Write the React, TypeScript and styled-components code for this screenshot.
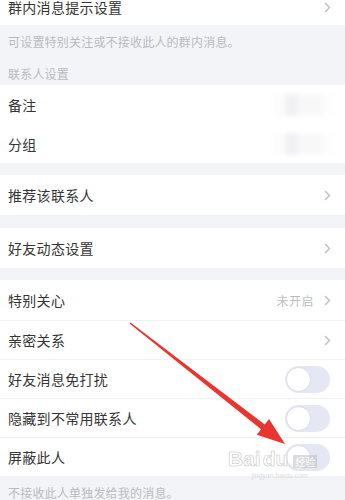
import { ReactNode } from 'react';
import styled, { createGlobalStyle } from 'styled-components';

const GlobalStyle = createGlobalStyle`
  html, body {
    margin: 0;
    padding: 0;
    background: #f3f4f7;
  }
  body {
    font-family: "Noto Sans CJK SC", "Noto Sans", sans-serif;
    -webkit-font-smoothing: antialiased;
  }
`;

const Screen = styled.div`
  position: relative;
  width: 345px;
  height: 500px;
  overflow: hidden;
  background: #f3f4f7;
`;

// page scrolled a little, so the first row is cut at the top
const Page = styled.div`
  display: flex;
  flex-direction: column;
  margin-top: -11px;
`;

const Row = styled.div<{ $h: number; $line?: boolean }>`
  display: flex;
  align-items: center;
  justify-content: space-between;
  height: ${(p) => p.$h}px;
  box-sizing: border-box;
  padding: 0 14px 0 8px;
  background: #fff;
  border-top: ${(p) => (p.$line ? '1px solid #f1f1f3' : 'none')};
`;

const Label = styled.span`
  font-size: 14px;
  letter-spacing: 0.3px;
  color: #353535;
  line-height: 20px;
`;

const Right = styled.div`
  display: flex;
  align-items: center;
  gap: 10px;
`;

const Hint = styled.span`
  font-size: 12px;
  letter-spacing: 0.5px;
  color: #bdbdc1;
`;

const Caption = styled.div<{ $pad: string }>`
  padding: ${(p) => p.$pad};
  font-size: 12px;
  line-height: 17px;
  letter-spacing: 0.2px;
  color: #b9babe;
`;

const Gap = styled.div<{ $h: number }>`
  height: ${(p) => p.$h}px;
`;

// blurred-out value (remark / group name)
const Masked = styled.div`
  width: 62px;
  height: 22px;
  margin-right: -4px;
  background: linear-gradient(
    90deg,
    #fcfcfc 0 20%,
    #f1f1f3 20% 40%,
    #f8f8f9 40% 80%,
    #fdfdfd 80% 100%
  );
  filter: blur(2px);
`;

const Track = styled.div`
  display: flex;
  align-items: center;
  width: 45px;
  height: 27px;
  margin-right: 1px;
  border-radius: 14px;
  background: #e5e7f4;
`;

const Knob = styled.div`
  width: 25px;
  height: 25px;
  margin-left: 1px;
  border-radius: 50%;
  box-sizing: border-box;
  background: #fff;
  border: 1px solid #dcdde3;
`;

const Overlay = styled.svg`
  position: absolute;
  left: 0;
  top: 0;
  pointer-events: none;
`;

const Watermark = styled.div`
  position: absolute;
  left: 228px;
  top: 448px;
  display: flex;
  flex-direction: column;
  align-items: center;
  pointer-events: none;
`;

const MarkLine = styled.div`
  display: flex;
  align-items: flex-end;
  gap: 2px;
`;

const MarkBig = styled.span`
  font-family: "Liberation Sans", Arial, sans-serif;
  font-size: 21px;
  font-weight: bold;
  color: rgba(255, 255, 255, 0.85);
  -webkit-text-stroke: 0.6px rgba(190, 190, 195, 0.9);
  line-height: 22px;
`;

const MarkBox = styled.span`
  font-size: 10px;
  color: rgba(255, 255, 255, 0.9);
  background: rgba(190, 190, 195, 0.55);
  padding: 0 2px;
  margin-left: 3px;
  line-height: 13px;
  margin-bottom: 2px;
`;

const MarkSmall = styled.span`
  font-family: "Liberation Sans", Arial, sans-serif;
  font-size: 7px;
  color: rgba(200, 200, 205, 0.6);
  margin-left: 14px;
  margin-top: 2px;
`;

const Chevron = () => (
  <svg width="7" height="11" viewBox="0 0 7 11">
    <path d="M1 1l4.5 4.5L1 10" fill="none" stroke="#bcbcc0" strokeWidth="1.3" />
  </svg>
);

const Toggle = () => (
  <Track>
    <Knob />
  </Track>
);

const Item = ({
  label,
  h = 40,
  line,
  children,
}: {
  label: string;
  h?: number;
  line?: boolean;
  children?: ReactNode;
}) => (
  <Row $h={h} $line={line}>
    <Label>{label}</Label>
    <Right>{children}</Right>
  </Row>
);

export default function App() {
  return (
    <Screen>
      <GlobalStyle />
      <Page>
        <Item label="群内消息提示设置" h={36}>
          <Chevron />
        </Item>
        <Caption $pad="8px 8px 0">可设置特别关注或不接收此人的群内消息。</Caption>
        <Caption $pad="15px 8px 3px">联系人设置</Caption>
        <Item label="备注" h={39}>
          <Masked />
        </Item>
        <Item label="分组" h={39}>
          <Masked />
        </Item>
        <Gap $h={12} />
        <Item label="推荐该联系人">
          <Chevron />
        </Item>
        <Gap $h={13} />
        <Item label="好友动态设置">
          <Chevron />
        </Item>
        <Gap $h={12} />
        <Item label="特别关心">
          <Hint>未开启</Hint>
          <Chevron />
        </Item>
        <Item label="亲密关系" h={39} line>
          <Chevron />
        </Item>
        <Item label="好友消息免打扰" h={39} line>
          <Toggle />
        </Item>
        <Item label="隐藏到不常用联系人" h={39} line>
          <Toggle />
        </Item>
        <Item label="屏蔽此人" h={39} line>
          <Toggle />
        </Item>
        <Caption $pad="8px 8px 0">不接收此人单独发给我的消息。</Caption>
      </Page>

      <Watermark>
        <MarkLine>
          <MarkBig>Bai</MarkBig>
          <MarkBig>du</MarkBig>
          <MarkBox>经验</MarkBox>
        </MarkLine>
        <MarkSmall>jingyan.baidu.com</MarkSmall>
      </Watermark>

      <Overlay width="345" height="500" viewBox="0 0 345 500">
        <polygon
          points="130.5,322.4 264.75,424.44 269.05,418.92 285,444 256.75,434.68 261.05,429.16 129.5,323.6"
          fill="#e9342f"
        />
      </Overlay>
    </Screen>
  );
}
